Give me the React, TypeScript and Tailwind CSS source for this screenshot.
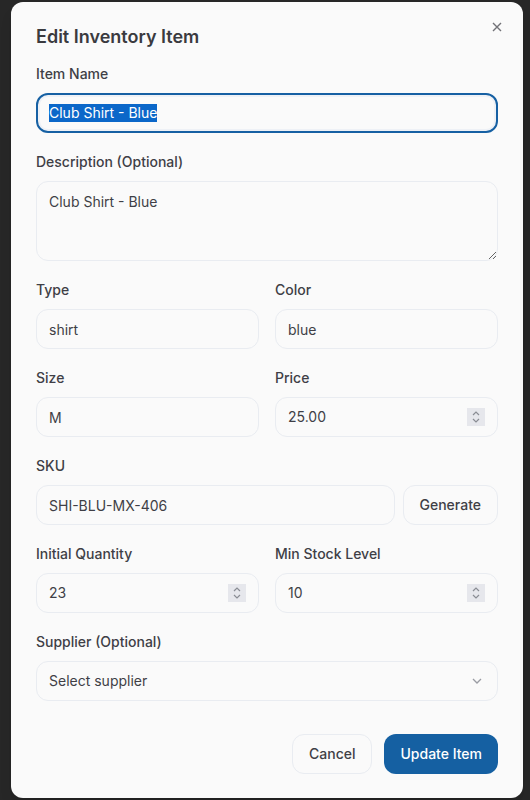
const font = { fontFamily: 'Inter, "Noto Sans", sans-serif' };

function Spinner() {
  return (
    <span className="flex h-[18px] w-[18px] items-center justify-center bg-[#e6e7ec]">
      <svg width="10" height="14" viewBox="0 0 10 14" fill="none" stroke="#8a8d94" strokeWidth="1.2">
        <path d="M2 5 L5 2 L8 5" />
        <path d="M2 9 L5 12 L8 9" />
      </svg>
    </span>
  );
}

function Field({ label, children }: { label: string; children: React.ReactNode }) {
  return (
    <div className="flex flex-col gap-[9px]">
      <label className="text-sm font-medium leading-5 text-[#3f3f46]">{label}</label>
      {children}
    </div>
  );
}

const box = 'h-10 w-full rounded-xl border border-[#e9ecf1] bg-[#fafafa] px-3 text-sm text-[#3f3f46] outline-none';

function NumberBox({ value }: { value: string }) {
  return (
    <div className="flex h-10 w-full items-center rounded-xl border border-[#e9ecf1] bg-[#fafafa] pl-3 pr-3">
      <input readOnly value={value} className="min-w-0 flex-1 bg-transparent text-sm text-[#3f3f46] outline-none" />
      <Spinner />
    </div>
  );
}

export default function App() {
  return (
    <div className="min-h-[800px] bg-[#272727] pt-[2px] pl-[11px]" style={font}>
      <div className="relative w-[512px] rounded-xl bg-[#fafafa] pl-[25px] pr-[25px] pt-[21px] pb-6 shadow-lg">
        {/* Close */}
        <button className="absolute right-[18px] top-[17px] text-[#727277]">
          <svg width="16" height="16" viewBox="0 0 16 16" fill="none" stroke="currentColor" strokeWidth="1.4">
            <path d="M4 4 L12 12 M12 4 L4 12" />
          </svg>
        </button>

        <h2 className="text-lg font-semibold leading-7 text-[#3a3a3f]">Edit Inventory Item</h2>

        <div className="mt-[13px] flex flex-col gap-[19px]">
          <Field label="Item Name">
            {/* focused input with its text selected */}
            <div className="flex h-10 w-full items-center rounded-xl border-2 border-[#1660a3] bg-[#fafafa] px-[11px] text-sm shadow-[inset_0_0_0_2px_#eef1f6]">
              <span className="bg-[#0b67c9] leading-[18px] text-white">Club Shirt - Blue</span>
            </div>
          </Field>

          <Field label="Description (Optional)">
            <textarea
              readOnly
              value="Club Shirt - Blue"
              className="min-h-[80px] w-full resize-y rounded-xl border border-[#e9ecf1] bg-[#fafafa] px-3 pt-[10px] pb-2 text-sm leading-5 text-[#3f3f46] outline-none"
            />
          </Field>

          <div className="grid grid-cols-2 gap-4">
            <Field label="Type">
              <input readOnly value="shirt" className={box} />
            </Field>
            <Field label="Color">
              <input readOnly value="blue" className={box} />
            </Field>
          </div>

          <div className="grid grid-cols-2 gap-4">
            <Field label="Size">
              <input readOnly value="M" className={box} />
            </Field>
            <Field label="Price">
              <NumberBox value="25.00" />
            </Field>
          </div>

          <Field label="SKU">
            <div className="flex gap-2">
              <input readOnly value="SHI-BLU-MX-406" className={box + ' flex-1'} />
              <button className="h-10 shrink-0 rounded-xl border border-[#e9ecf1] bg-[#fafafa] px-4 text-sm font-medium text-[#3f3f46]">
                Generate
              </button>
            </div>
          </Field>

          <div className="grid grid-cols-2 gap-4">
            <Field label="Initial Quantity">
              <NumberBox value="23" />
            </Field>
            <Field label="Min Stock Level">
              <NumberBox value="10" />
            </Field>
          </div>

          <Field label="Supplier (Optional)">
            <button className="flex h-10 w-full items-center justify-between rounded-xl border border-[#e9ecf1] bg-[#fafafa] px-3 text-sm text-[#3f3f46]">
              <span>Select supplier</span>
              <svg width="16" height="16" viewBox="0 0 16 16" fill="none" stroke="#9a9ca3" strokeWidth="1.3">
                <path d="M4 6 L8 10 L12 6" />
              </svg>
            </button>
          </Field>
        </div>

        <div className="mt-[33px] flex justify-end gap-3">
          <button className="h-10 rounded-xl border border-[#e9ecf1] bg-[#fafafa] px-4 text-sm font-medium text-[#3f3f46]">
            Cancel
          </button>
          <button className="h-10 rounded-xl bg-[#1560a2] px-4 text-sm font-medium text-white">
            Update Item
          </button>
        </div>
      </div>
    </div>
  );
}
